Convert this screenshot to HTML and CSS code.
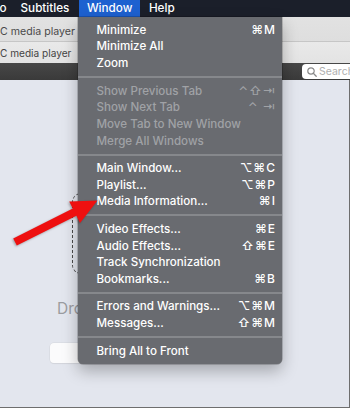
FILE: index.html
```html
<!DOCTYPE html>
<html>
<head>
<meta charset="utf-8">
<link rel="stylesheet" href="styles.css">
</head>
<body>
<div class="screen">
  <div class="menubar">
    <span class="mb-item first">o</span>
    <span class="mb-item subs">Subtitles</span>
    <span class="mb-item active">Window</span>
    <span class="mb-item">Help</span>
  </div>
  <div class="window">
    <div class="titlebar"><span class="title">C media player</span></div>
    <div class="tabbar"><span class="tab-title">C media player</span></div>
    <div class="toolbar">
      <div class="search">
        <svg class="search-icon" width="10" height="10" viewBox="0 0 10 10"><circle cx="4" cy="4" r="3.2" fill="none" stroke="#8a8a8a" stroke-width="1.2"/><line x1="6.3" y1="6.3" x2="9.2" y2="9.2" stroke="#8a8a8a" stroke-width="1.3" stroke-linecap="round"/></svg>
        <span class="search-text">Search</span>
      </div>
    </div>
    <div class="content">
      <div class="dropzone"></div>
      <div class="drop-text">Drop media here</div>
      <div class="open-btn"><span>Open media...</span></div>
    </div>
  </div>
  <div class="menu">
    <div class="row"><span>Minimize</span><span class="key">⌘M</span></div>
    <div class="row"><span>Minimize All</span></div>
    <div class="row"><span>Zoom</span></div>
    <div class="sep"></div>
    <div class="row disabled"><span>Show Previous Tab</span><span class="key">⌃⇧⇥</span></div>
    <div class="row disabled"><span>Show Next Tab</span><span class="key">⌃ ⇥</span></div>
    <div class="row disabled"><span>Move Tab to New Window</span></div>
    <div class="row disabled"><span>Merge All Windows</span></div>
    <div class="sep"></div>
    <div class="row"><span>Main Window...</span><span class="key">⌥⌘C</span></div>
    <div class="row"><span>Playlist...</span><span class="key">⌥⌘P</span></div>
    <div class="row"><span>Media Information...</span><span class="key">⌘I</span></div>
    <div class="sep"></div>
    <div class="row"><span>Video Effects...</span><span class="key">⌘E</span></div>
    <div class="row"><span>Audio Effects...</span><span class="key">⇧⌘E</span></div>
    <div class="row"><span>Track Synchronization</span></div>
    <div class="row"><span>Bookmarks...</span><span class="key">⌘B</span></div>
    <div class="sep"></div>
    <div class="row"><span>Errors and Warnings...</span><span class="key">⌥⌘M</span></div>
    <div class="row"><span>Messages...</span><span class="key">⇧⌘M</span></div>
    <div class="sep"></div>
    <div class="row"><span>Bring All to Front</span></div>
  </div>
  <svg class="arrow" width="350" height="408" viewBox="0 0 350 408">
    <polygon points="13.2,238.4 72.8,208.6 69.2,201.4 97.5,200.5 80,223 76.4,215.8 16.8,245.6" fill="#ee1010"/>
  </svg>
</div>
</body>
</html>
```

FILE: styles.css
```css
html, body {
  margin: 0;
  padding: 0;
}
body {
  width: 350px;
  height: 408px;
  overflow: hidden;
  background: #e3e6ee;
  font-family: "Inter", "DejaVu Sans", sans-serif;
}
.screen {
  position: relative;
  width: 350px;
  height: 408px;
  overflow: hidden;
  display: flex;
  flex-direction: column;
}
.menubar {
  height: 17px;
  flex: none;
  background: #1b1f2a;
  display: flex;
  align-items: center;
  color: #fff;
  font-size: 11.7px;
  font-weight: 500;
}
.mb-item {
  height: 17px;
  line-height: 17px;
  padding: 0 8.5px;
}
.mb-item.first {
  padding-left: 0;
  margin-left: -0.5px;
  padding-right: 5.5px;
}
.mb-item.subs {
  padding-right: 9.5px;
}
.mb-item.active {
  background: #1d61d0;
  padding: 0 8px;
}
.window {
  flex: 1 1 auto;
  display: flex;
  flex-direction: column;
  min-height: 0;
}
.titlebar {
  height: 25px;
  min-height: 25px;
  flex: none;
  box-sizing: border-box;
  background: linear-gradient(#e2e2e2, #dedede);
  border-bottom: 1px solid #c6c6c6;
  display: flex;
  align-items: center;
}
.title {
  font-size: 10.6px;
  color: #4a4a4a;
  margin-top: 5px;
}
.tabbar {
  height: 21px;
  min-height: 21px;
  flex: none;
  background: linear-gradient(#e9e9e9, #e3e3e3);
  display: flex;
  align-items: center;
}
.tab-title {
  font-size: 10.1px;
  color: #444;
}
.toolbar {
  height: 17px;
  min-height: 17px;
  flex: none;
  box-sizing: border-box;
  background: linear-gradient(#474747, #3a3a3a);
  display: flex;
  justify-content: flex-end;
  align-items: center;
}
.search {
  width: 48px;
  height: 15px;
  background: #fff;
  border-radius: 4px 0 0 4px;
  display: flex;
  align-items: center;
  gap: 2px;
  padding-left: 5px;
  box-sizing: border-box;
  overflow: hidden;
}
.search-icon {
  flex: none;
}
.search-text {
  font-size: 10.5px;
  color: #b0b0b0;
  white-space: nowrap;
}
.content {
  flex: 1 1 auto;
  display: flex;
  flex-direction: column;
  align-items: flex-start;
  border-right: 1px solid #6e6e6e;
  border-bottom: 1.5px solid #6e6e6e;
  background: #e3e6ee;
}
.dropzone {
  margin: 113px 0 0 72px;
  width: 204px;
  height: 81px;
  box-sizing: border-box;
  border: 1.6px dashed #4a4a4a;
  border-radius: 9px;
}
.drop-text {
  margin: 25px 0 0 57px;
  font-size: 15.5px;
  color: #9b9ca0;
  white-space: nowrap;
}
.open-btn {
  margin: 25px 0 0 50px;
  width: 134px;
  height: 20px;
  background: #fbfbfc;
  border-radius: 4px;
  box-shadow: 0 0 0 0.5px #d4d6dc, 0 1px 1px rgba(0,0,0,0.08);
  font-size: 11px;
  color: #222;
  display: flex;
  align-items: center;
  justify-content: center;
}
.menu {
  position: absolute;
  left: 78px;
  top: 17px;
  width: 204px;
  box-sizing: border-box;
  padding: 4.8px 0 4.4px;
  background: #696b70;
  border-radius: 0 0 5px 5px;
  box-shadow: 0 7px 16px rgba(0,0,0,0.28), 0 0 0 0.5px rgba(0,0,0,0.35);
  color: #fff;
  font-size: 11.6px;
  font-weight: 500;
}
.row {
  height: 16.65px;
  line-height: 16.65px;
  display: flex;
  justify-content: space-between;
  padding: 0 7px 0 18.5px;
  white-space: nowrap;
}
.row.disabled {
  color: #a0a2a6;
}
.key {
  font-size: 12px;
  letter-spacing: 1px;
  margin-right: -1px;
}
.sep {
  height: 10.9px;
  display: flex;
  align-items: center;
}
.sep::before {
  content: "";
  flex: 1;
  height: 2px;
  background: #86888c;
}
.arrow {
  position: absolute;
  left: 0;
  top: 0;
  pointer-events: none;
  filter: drop-shadow(-1px 1px 1px rgba(0,0,0,0.3));
}
```
